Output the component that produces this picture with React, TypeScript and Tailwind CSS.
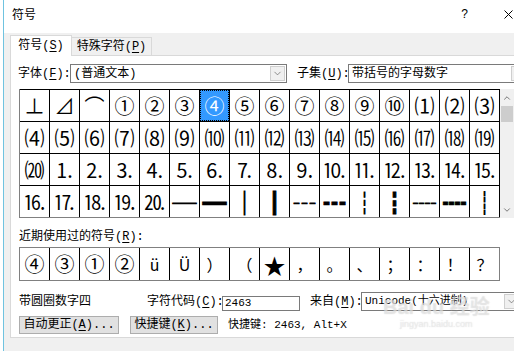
import { ChevronDown, ChevronUp } from "lucide-react";

const ui = "font-['Liberation_Mono','Noto_Sans_CJK_SC',monospace]";
const glyph = "font-['Noto_Sans_CJK_SC','DejaVu_Sans',sans-serif]";

const rows = [
  ["⊥", "⊿", "⌒", "①", "②", "③", "④", "⑤", "⑥", "⑦", "⑧", "⑨", "⑩", "⑴", "⑵", "⑶"],
  ["⑷", "⑸", "⑹", "⑺", "⑻", "⑼", "⑽", "⑾", "⑿", "⒀", "⒁", "⒂", "⒃", "⒄", "⒅", "⒆"],
  ["⒇", "⒈", "⒉", "⒊", "⒋", "⒌", "⒍", "⒎", "⒏", "⒐", "⒑", "⒒", "⒓", "⒔", "⒕", "⒖"],
  ["⒗", "⒘", "⒙", "⒚", "⒛", "─", "━", "│", "┃", "┄", "┅", "┆", "┇", "┈", "┉", "┊"],
];

const recent = ["④", "③", "①", "②", "ü", "Ü", "）", "（", "★", "，", "。", "、", "；", "：", "！", "？"];

const Label = ({ text, k, className = "" }: { text: string; k: string; className?: string }) => (
  <span className={`shrink-0 whitespace-nowrap ${className}`}>
    {text}(<span className="underline underline-offset-2">{k}</span>):
  </span>
);

const Combo = ({ value, className = "" }: { value: string; className?: string }) => (
  <div className={`flex h-[19px] shrink-0 items-center border border-[#7a7a7a] bg-white ${className}`}>
    <span className="flex-1 truncate pl-[3px]">{value}</span>
    <span className="mr-px flex h-[15px] w-[15px] items-center justify-center border border-[#cfcfcf] bg-[#f0f0f0]">
      <ChevronDown size={11} strokeWidth={1.5} className="text-[#606060]" />
    </span>
  </div>
);

const Scrollbar = () => (
  <div className="flex h-[129px] w-[14px] shrink-0 flex-col bg-[#f0f0f0]">
    <div className="flex h-[17px] items-center justify-center">
      <ChevronUp size={10} strokeWidth={2} className="text-[#606060]" />
    </div>
    <div className="mx-px h-[16px] bg-[#cdcdcd]" />
    <div className="flex-1" />
    <div className="flex h-[17px] items-center justify-center">
      <ChevronDown size={10} strokeWidth={2} className="text-[#606060]" />
    </div>
  </div>
);

export default function App() {
  return (
    <div className={`relative flex h-[351px] w-[514px] overflow-hidden bg-[#f0f0f0] text-[12px] text-black ${ui}`}>
      {/* window edge */}
      <div className="w-[3px] shrink-0 bg-white" />
      <div className="w-px shrink-0 bg-[#6fc3e0]" />

      <div className="flex min-w-0 flex-1 flex-col">
        {/* title bar */}
        <div className="flex h-[33px] shrink-0 items-start bg-white pl-[8px] pt-[6px] leading-[16px]">
          <span className="font-['Noto_Sans_CJK_SC',sans-serif]">符号</span>
          <span className="ml-auto font-['Liberation_Sans',sans-serif] text-[12px]">?</span>
          <svg width="9" height="9" viewBox="0 0 9 9" className="ml-[36px] mr-px mt-[4px] shrink-0">
            <path d="M0.5 0.5 L8.5 8.5 M8.5 0.5 L0.5 8.5" stroke="#000" strokeWidth="1" />
          </svg>
        </div>

        <div className="flex flex-1 flex-col pl-[6px] pt-[2px]">
          {/* tabs */}
          <div className="relative z-10 flex h-[21px] items-start">
            <div className="flex h-[21px] w-[62px] shrink-0 items-center justify-center border border-b-0 border-[#d9d9d9] bg-white">
              <span>
                符号(<span className="underline underline-offset-2">S</span>)
              </span>
            </div>
            <div className="mt-[2px] flex h-[18px] w-[80px] shrink-0 items-center justify-center border border-l-0 border-b-0 border-[#d9d9d9] bg-[#f0f0f0]">
              <span>
                特殊字符(<span className="underline underline-offset-2">P</span>)
              </span>
            </div>
          </div>

          {/* panel */}
          <div className="-mt-px w-[520px] shrink-0 border border-[#d9d9d9] bg-white pb-[3px] pl-[8px] pt-[8px]">
            <div className="flex items-center">
              <Label text="字体" k="F" className="-ml-px w-[52px]" />
              <Combo value="(普通文本)" className="w-[217px]" />
              <Label text="子集" k="U" className="ml-[10px] w-[51px]" />
              <Combo value="带括号的字母数字" className="w-[180px]" />
            </div>

            {/* symbol grid */}
            <div className="mt-[6px] flex">
              <div className="shrink-0 border-b border-l border-[#808080]">
                <div className={`grid grid-cols-[repeat(16,29px)] grid-rows-[repeat(4,31px)] gap-px border-r border-t border-black bg-black ${glyph}`}>
                  {rows.flat().map((ch, i) => {
                    const selected = i === 6;
                    const box = i >= 53;
                    return (
                      <div
                        key={i}
                        className={`flex items-center justify-center leading-none ${
                          box ? "text-[24px] [-webkit-text-stroke:0.8px_black]" : "text-[20px]"
                        } ${
                          selected
                            ? "bg-[#3399ff] text-white outline-1 -outline-offset-1 outline-dotted outline-black"
                            : "bg-white"
                        }`}
                      >
                        {ch}
                      </div>
                    );
                  })}
                </div>
              </div>
              <Scrollbar />
            </div>

            {/* recently used */}
            <div className="mt-[11px] h-[16px] leading-[16px]">
              近期使用过的符号(<span className="underline underline-offset-2">R</span>):
            </div>
            <div className="mt-[2px] w-fit border border-[#808080]">
              <div className={`grid grid-cols-[repeat(16,29px)] grid-rows-[32px] gap-px bg-black ${glyph}`}>
                {recent.map((ch, i) => (
                  <div
                    key={i}
                    className={`flex items-center justify-center bg-white leading-none ${
                      i < 4 ? "text-[20px]" : i === 8 ? "text-[22px]" : "text-[16px]"
                    }`}
                  >
                    {ch}
                  </div>
                ))}
              </div>
            </div>

            {/* character info */}
            <div className="mt-[11px] flex h-[19px] items-center">
              <span className="w-[128px] shrink-0">带圆圈数字四</span>
              <Label text="字符代码" k="C" className="w-[75px]" />
              <div className="mt-[4px] flex h-[15px] w-[78px] shrink-0 items-center border border-[#7a7a7a] bg-white pl-[2px] text-[11px]">
                2463
              </div>
              <Label text="来自" k="M" className="ml-[10px] w-[51px]" />
              <Combo value="Unicode(十六进制)" className="w-[160px] text-[11px]" />
            </div>

            <div className="mt-[5px] flex items-center">
              <button className="flex h-[18px] w-[100px] shrink-0 items-center justify-center border border-[#adadad] bg-[#e1e1e1]">
                <span>
                  自动更正(<span className="underline underline-offset-2">A</span>)...
                </span>
              </button>
              <button className="ml-[11px] flex h-[18px] w-[88px] shrink-0 items-center justify-center border border-[#adadad] bg-[#e1e1e1]">
                <span>
                  快捷键(<span className="underline underline-offset-2">K</span>)...
                </span>
              </button>
              <span className="ml-[10px] shrink-0 text-[11px]">快捷键: 2463, Alt+X</span>
            </div>
          </div>
        </div>
      </div>

      {/* watermark */}
      <div className="pointer-events-none absolute left-[383px] top-[296px] flex flex-col items-center font-['Liberation_Sans','Noto_Sans_CJK_SC',sans-serif] text-white/40 [text-shadow:0_0_1px_rgba(180,180,180,0.6)]">
        <span className="text-[20px] font-bold leading-[22px]">Bai du 经验</span>
        <span className="text-[9px] leading-[12px]">jingyan.baidu.com</span>
      </div>
    </div>
  );
}
